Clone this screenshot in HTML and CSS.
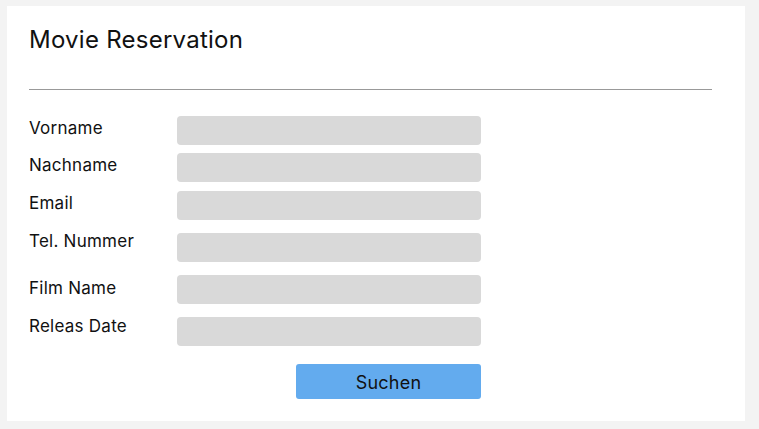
FILE: index.html
```html
<!DOCTYPE html>
<html lang="de">
<head>
<meta charset="utf-8">
<title>Movie Reservation</title>
<link rel="stylesheet" href="styles.css">
</head>
<body>
<main class="card">
  <h1 class="title">Movie Reservation</h1>
  <hr class="divider">
  <form class="form">
    <div class="row row-a">
      <label class="label">Vorname</label>
      <div class="field"></div>
    </div>
    <div class="row row-b">
      <label class="label">Nachname</label>
      <div class="field"></div>
    </div>
    <div class="row row-c">
      <label class="label">Email</label>
      <div class="field"></div>
    </div>
    <div class="row row-d">
      <label class="label">Tel. Nummer</label>
      <div class="field"></div>
    </div>
    <div class="row row-e">
      <label class="label">Film Name</label>
      <div class="field"></div>
    </div>
    <div class="row row-f">
      <label class="label">Releas Date</label>
      <div class="field"></div>
    </div>
    <div class="actions">
      <button type="button" class="button">Suchen</button>
    </div>
  </form>
</main>
</body>
</html>
```

FILE: styles.css
```css
html, body {
  margin: 0;
  background: #f3f3f3;
}
body {
  padding: 6px 14px 8px 7px;
  font-family: Inter, "Noto Sans", sans-serif;
  color: #111;
}
.card {
  background: #fff;
  width: 738px;
  height: 415px;
  box-sizing: border-box;
  padding: 19px 33px 0 22px;
}
.title {
  margin: 0;
  font-size: 24px;
  letter-spacing: 0.25px;
  font-weight: 400;
  line-height: 30px;
  color: #111;
}
.divider {
  margin: 34px 0 0 0;
  border: 0;
  height: 1px;
  background: #999;
}
.form {
  display: flex;
  flex-direction: column;
  margin-top: 26px;
}
.row {
  display: flex;
  align-items: flex-start;
}
.label {
  width: 148px;
  flex: none;
  font-size: 17px;
  letter-spacing: 0.25px;
  line-height: 19px;
  padding-top: 3px;
}
.field {
  width: 304px;
  height: 29px;
  background: #d9d9d9;
  border-radius: 4px;
}
.row-b { margin-top: 8px; }
.row-c { margin-top: 9px; }
.row-d { margin-top: 13px; }
.row-d .label { padding-top: 0; margin-top: -1px; }
.row-e { margin-top: 13px; }
.row-e .label { padding-top: 4px; }
.row-f { margin-top: 13px; }
.row-f .label { padding-top: 0; }
.actions {
  margin-top: 18px;
  width: 452px;
  display: flex;
  justify-content: flex-end;
}
.button {
  width: 185px;
  height: 35px;
  border: 0;
  border-radius: 3px;
  background: #63abee;
  font-family: Inter, "Noto Sans", sans-serif;
  font-size: 18px;
  letter-spacing: 0.2px;
  color: #111;
  padding: 0;
  padding-top: 1px;
}
```
